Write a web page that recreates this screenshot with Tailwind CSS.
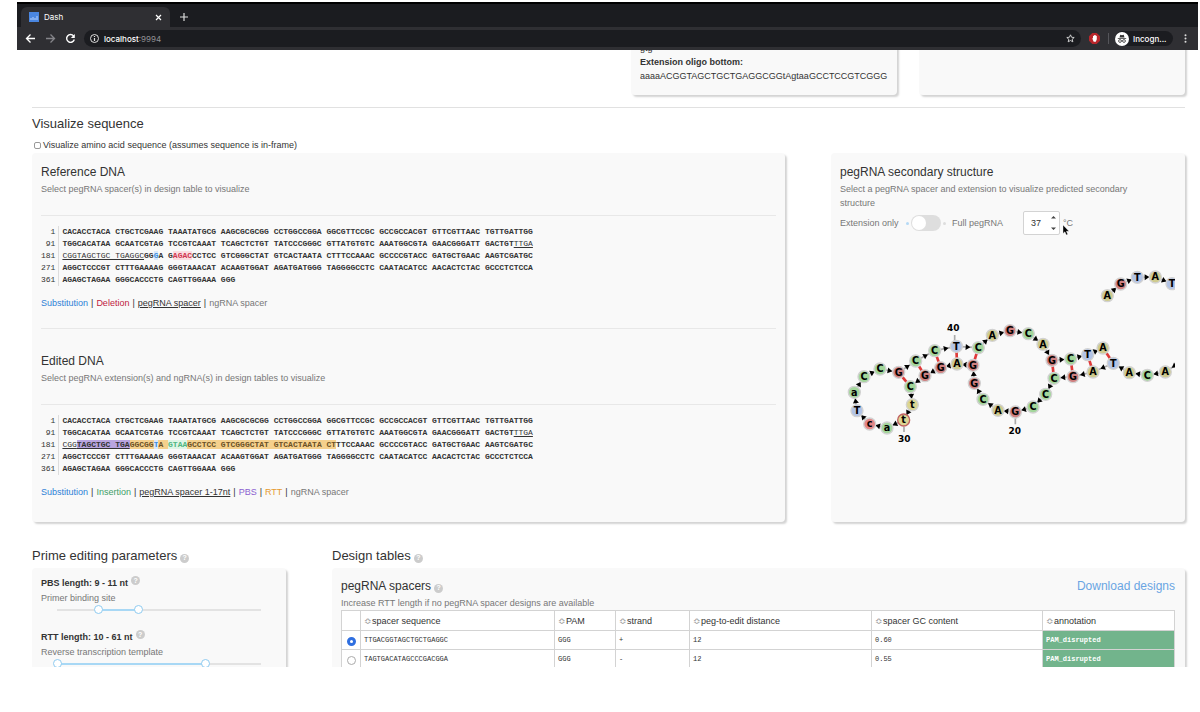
<!DOCTYPE html>
<html lang="en">
<head>
  <meta charset="UTF-8">
  <meta name="viewport" content="width=device-width, initial-scale=1.0">
  <title>Dash</title>
  <script src="https://cdn.jsdelivr.net/npm/@tailwindcss/browser@4"></script>
</head>
<body class="bg-white font-['Liberation_Sans',Arial,sans-serif] text-[9px] leading-[14px] text-[#333]">
  <div class="flex h-screen flex-col pt-[2px] pr-[2px] pb-[45px] pl-[17px]">

    <!-- browser bar -->
    <header class="shrink-0 border-t-2 border-black bg-[#1b1c20] font-[Inter,sans-serif] text-[8px] text-white">
      <div class="flex h-[23px] items-end">
        <div class="ml-1 flex h-5 w-[149px] items-center rounded-t-md bg-[#2f2f33] px-2">
          <svg class="size-[10px]" viewBox="0 0 10 10"><rect width="10" height="10" fill="#4a86e0"/><path d="M2 8V6M4 8V5M6 8V6M8 8V4" stroke="#b9d4ff"/></svg>
          <span class="ml-[5px]">Dash</span>
          <button class="ml-auto" aria-label="Close tab"><svg class="size-[7px]" viewBox="0 0 7 7"><path d="M1 1l5 5M6 1l-5 5" stroke="#fff" stroke-width="1.2"/></svg></button>
        </div>
        <button class="mb-[6px] ml-[10px]" aria-label="New tab"><svg class="size-[8px]" viewBox="0 0 8 8"><path d="M4 0v8M0 4h8" stroke="#ddd" stroke-width="1.2"/></svg></button>
      </div>
      <div class="flex h-[23px] items-center bg-[#2f2f33] pl-2">
        <button aria-label="Back"><svg class="size-[11px]" viewBox="0 0 11 11" fill="none" stroke="#fff" stroke-width="1.3"><path d="M10 5.500H1.500M5.500 1.500l-4 4 4 4"/></svg></button>
        <button class="ml-[9px]" aria-label="Forward"><svg class="size-[11px]" viewBox="0 0 11 11" fill="none" stroke="#85858a" stroke-width="1.300"><path d="M1 5.500h8.500M5.500 1.500l4 4-4 4"/></svg></button>
        <button class="ml-[9px]" aria-label="Reload"><svg class="size-[11px]" viewBox="0 0 11 11" fill="none" stroke="#fff" stroke-width="1.400"><path d="M8.600 3A3.900 3.900 0 1 0 9.300 6.500"/><path d="M9.800 1v4H5.800z" fill="#fff" stroke="none"/></svg></button>
        <div class="ml-2 flex h-[17px] flex-1 items-center rounded-full bg-[#1b1c20] pr-[6px] pl-[6px]">
          <svg class="size-[9px]" viewBox="0 0 9 9" fill="none" stroke="#ddd"><circle cx="4.500" cy="4.500" r="4"/><path d="M4.500 4v3M4.500 2v1" stroke-width="1.200"/></svg>
          <span class="ml-[5px] flex-1 font-medium">localhost<span class="font-normal text-[#929296]">:9994</span></span>
          <button aria-label="Bookmark"><svg class="size-[9px]" viewBox="0 0 10 10" fill="none" stroke="#ddd"><path d="M5 .9l1.200 2.700 2.900.3-2.200 1.900.7 2.900L5 7.200 2.400 8.700l.7-2.900L.9 3.900l2.900-.3z"/></svg></button>
        </div>
        <button class="ml-2" aria-label="Ad blocker"><svg class="size-[11px]" viewBox="0 0 11 11"><path d="M3.300 0h4.400L11 3.300v4.400L7.700 11H3.300L0 7.700V3.300z" fill="#b8262b"/><path d="M3.300 5.500l.7-.4V3h.8v-.8h.8v-.3h.8v.6h.8v.6h.6v3.200L6.800 8.700H4.700z" fill="#fff"/></svg></button>
        <span class="ml-2 h-[11px] w-px bg-[#55555a]"></span>
        <div class="ml-[6px] flex h-[15px] w-[58px] items-center rounded-full bg-[#1b1c20]">
          <svg class="size-[14px]" viewBox="0 0 14 14"><circle cx="7" cy="7" r="7" fill="#fff"/><path d="M4.500 5.600l.8-2.800 1.700.4 1.700-.4.8 2.800zM2.800 6h8.400v.8H2.800z" fill="#333"/><g fill="none" stroke="#333" stroke-width=".8"><circle cx="5" cy="9" r="1.400"/><circle cx="9" cy="9" r="1.400"/><path d="M6.400 8.800h1.200"/></g></svg>
          <span class="ml-1 font-medium">Incogn...</span>
        </div>
        <button class="mr-[11px] ml-[11px]" aria-label="Menu"><svg class="h-[9px] w-[3px]" viewBox="0 0 3 9" fill="#ddd"><circle cx="1.500" cy="1.200" r="1"/><circle cx="1.500" cy="4.500" r="1"/><circle cx="1.500" cy="7.800" r="1"/></svg></button>
      </div>
    </header>

    <main class="min-h-0 flex-1 overflow-hidden pr-[13px] pl-[15px]">
      <!-- oligo cards, scrolled under the bar -->
      <section class="-mt-[9px] grid grid-cols-[577fr_266fr_266fr] gap-[22px]">
        <div></div>
        <div class="min-w-0 rounded bg-[#f9f9f9] px-[9px] pb-3 shadow-[2px_2px_2px_#d3d3d3]">
          <p>gtg</p>
          <p class="font-bold">Extension oligo bottom:</p>
          <p class="overflow-hidden whitespace-nowrap">aaaaACGGTAGCTGCTGAGGCGGtAgtaaGCCTCCGTCGGG</p>
        </div>
        <div class="rounded bg-[#f9f9f9] shadow-[2px_2px_2px_#d3d3d3]"></div>
      </section>

      <hr class="mt-[12px] border-[#e1e1e1]">

      <h2 class="mt-[6px] text-[13px] leading-5">Visualize sequence</h2>
      <label class="mt-1 flex items-center gap-[2px] pl-[2px]">
        <input type="checkbox" class="size-[7px] appearance-none rounded-[2px] border border-[#999] bg-white">
        Visualize amino acid sequence (assumes sequence is in-frame)
      </label>

      <section class="mt-[1px] grid grid-cols-[753fr_354fr] gap-[46px]">
        <div class="rounded bg-[#f9f9f9] px-[9px] pt-[9px] pb-[23px] shadow-[2px_2px_2px_#d3d3d3]">
          <h3 class="text-[12px] leading-5">Reference DNA</h3>
          <p class="text-[#777]">Select pegRNA spacer(s) in design table to visualize</p>
          <hr class="mt-[19px] border-[#e8e8e8]">
          <table class="mt-[10px] font-['Liberation_Mono','Courier_New',monospace] text-[8px] leading-3 whitespace-pre">
            <tr><td class="pr-[3px] text-right">1</td><td class="border-l border-[#ddd] pl-[3px] font-bold">CACACCTACA CTGCTCGAAG TAAATATGCG AAGCGCGCGG CCTGGCCGGA GGCGTTCCGC GCCGCCACGT GTTCGTTAAC TGTTGATTGG</td></tr>
            <tr><td class="pr-[3px] text-right">91</td><td class="border-l border-[#ddd] pl-[3px] font-bold">TGGCACATAA GCAATCGTAG TCCGTCAAAT TCAGCTCTGT TATCCCGGGC GTTATGTGTC AAATGGCGTA GAACGGGATT GACTGT<span class="font-normal underline">TTGA</span></td></tr>
            <tr><td class="pr-[3px] text-right">181</td><td class="border-l border-[#ddd] pl-[3px] font-bold"><span class="font-normal underline">CGGTAGCTGC TGAGGC</span>GG<span class="bg-[#d9e9fc] text-[#3b8de0]">G</span>A G<span class="bg-[#fadde0] text-[#d0364f]">AGAC</span>CCTCC GTCGGGCTAT GTCACTAATA CTTTCCAAAC GCCCCGTACC GATGCTGAAC AAGTCGATGC</td></tr>
            <tr><td class="pr-[3px] text-right">271</td><td class="border-l border-[#ddd] pl-[3px] font-bold">AGGCTCCCGT CTTTGAAAAG GGGTAAACAT ACAAGTGGAT AGATGATGGG TAGGGGCCTC CAATACATCC AACACTCTAC GCCCTCTCCA</td></tr>
            <tr><td class="pr-[3px] text-right">361</td><td class="border-l border-[#ddd] pl-[3px] font-bold">AGAGCTAGAA GGGCACCCTG CAGTTGGAAA GGG</td></tr>
          </table>
          <p class="mt-[10px] flex gap-[3px]"><span class="text-[#2d7fd6]">Substitution</span> | <span class="text-[#c0213f]">Deletion</span> | <span class="underline">pegRNA spacer</span> | <span class="text-[#777]">ngRNA spacer</span></p>
          <hr class="mt-[18px] border-[#e8e8e8]">

          <h3 class="mt-[22px] text-[12px] leading-5">Edited DNA</h3>
          <p class="text-[#777]">Select pegRNA extension(s) and ngRNA(s) in design tables to visualize</p>
          <hr class="mt-[19px] border-[#e8e8e8]">
          <table class="mt-[10px] font-['Liberation_Mono','Courier_New',monospace] text-[8px] leading-3 whitespace-pre">
            <tr><td class="pr-[3px] text-right">1</td><td class="border-l border-[#ddd] pl-[3px] font-bold">CACACCTACA CTGCTCGAAG TAAATATGCG AAGCGCGCGG CCTGGCCGGA GGCGTTCCGC GCCGCCACGT GTTCGTTAAC TGTTGATTGG</td></tr>
            <tr><td class="pr-[3px] text-right">91</td><td class="border-l border-[#ddd] pl-[3px] font-bold">TGGCACATAA GCAATCGTAG TCCGTCAAAT TCAGCTCTGT TATCCCGGGC GTTATGTGTC AAATGGCGTA GAACGGGATT GACTGT<span class="font-normal underline">TTGA</span></td></tr>
            <tr><td class="pr-[3px] text-right">181</td><td class="border-l border-[#ddd] pl-[3px] font-bold"><span class="font-normal underline">CGG</span><span class="bg-[#b9a5e0] underline">TAGCTGC TGA</span><span class="bg-[#f5d08c] text-[#6b5026]">GGCGG</span><span class="bg-[#d9e9fc] text-[#3b8de0]">T</span><span class="bg-[#f5d08c] text-[#6b5026]">A </span><span class="bg-[#dff5e6] text-[#4fb783]">GTAA</span><span class="bg-[#f5d08c] text-[#6b5026]">GCCTCC GTCGGGCTAT GTCACTAATA CT</span>TTCCAAAC GCCCCGTACC GATGCTGAAC AAGTCGATGC</td></tr>
            <tr><td class="pr-[3px] text-right">271</td><td class="border-l border-[#ddd] pl-[3px] font-bold">AGGCTCCCGT CTTTGAAAAG GGGTAAACAT ACAAGTGGAT AGATGATGGG TAGGGGCCTC CAATACATCC AACACTCTAC GCCCTCTCCA</td></tr>
            <tr><td class="pr-[3px] text-right">361</td><td class="border-l border-[#ddd] pl-[3px] font-bold">AGAGCTAGAA GGGCACCCTG CAGTTGGAAA GGG</td></tr>
          </table>
          <p class="mt-[10px] flex gap-[3px]"><span class="text-[#2d7fd6]">Substitution</span> | <span class="text-[#3f9e68]">Insertion</span> | <span class="underline">pegRNA spacer 1-17nt</span> | <span class="text-[#8b5fd0]">PBS</span> | <span class="text-[#e69a2e]">RTT</span> | <span class="text-[#777]">ngRNA spacer</span></p>
        </div>

        <div class="rounded bg-[#f9f9f9] pt-[9px] pr-[10px] pl-[9px] shadow-[2px_2px_2px_#d3d3d3]">
          <h3 class="text-[12px] leading-5">pegRNA secondary structure</h3>
          <p class="pr-4 text-[#777]">Select a pegRNA spacer and extension to visualize predicted secondary structure</p>
          <div class="mt-[1px] flex h-6 items-center text-[#777]">
            <span class="w-[66px]">Extension only</span>
            <span class="size-[3px] rounded-full bg-[#b5d9f5]"></span>
            <input type="checkbox" role="switch" aria-label="Full pegRNA" class="mx-[2px] flex h-4 w-[30px] appearance-none items-center rounded-full bg-[#dedede] px-px before:size-[14px] before:rounded-full before:bg-white">
            <span class="size-[3px] rounded-full bg-[#ddd]"></span>
            <span class="ml-[6px] w-[71px]">Full pegRNA</span>
            <div class="relative">
              <input type="text" inputmode="numeric" value="37" aria-label="Temperature" class="block h-6 w-[37px] rounded-[2px] border border-[#d3d3d3] bg-white pl-[7px] text-[#333]">
              <svg class="absolute top-[5px] right-1 h-[14px] w-[5px]" viewBox="0 0 5 14" fill="#444"><path d="M0 2.500L2.500 0 5 2.500zM0 11.500h5L2.500 14z"/></svg>
            </div>
            <span class="relative ml-[3px]">°C
              <svg class="absolute top-[9px] left-0 h-[10px] w-[7px]" viewBox="0 0 7 10"><path d="M0 0v8.500l1.900-1.700L3.300 10l1.500-.7-1.400-3H6z" fill="#000" stroke="#fff" stroke-width=".4"/></svg>
            </span>
          </div>
          <svg id="rna" class="mt-5 block w-full font-['DejaVu_Sans',Verdana,sans-serif] font-bold" viewBox="60 0 1005 600" text-anchor="middle"></svg>
        </div>
      </section>

      <section class="mt-6 grid grid-cols-[254fr_853fr] gap-[46px]">
        <div>
          <h2 class="flex items-center gap-[3px] text-[13px] leading-5">Prime editing parameters <span class="mt-1 flex size-[9px] items-center justify-center rounded-full bg-[#ccc] text-[7px] font-bold text-white">?</span></h2>
          <div class="mt-[2px] rounded bg-[#f9f9f9] px-[9px] pt-2 pb-10 shadow-[2px_2px_2px_#d3d3d3]">
            <h4 class="flex gap-[3px] font-bold">PBS length: 9 - 11 nt <span class="flex size-[9px] items-center justify-center rounded-full bg-[#ccc] text-[7px] text-white">?</span></h4>
            <p class="mt-px text-[#777]">Primer binding site</p>
            <div class="relative mr-4 ml-4 flex h-[9px] items-center">
              <div class="h-[2px] w-full bg-[#e3e3e3]"><div class="h-full bg-[#a8d8f5]" style="margin-left: 20%; width: 20%"></div></div>
              <input type="range" min="7" max="17" value="9" aria-label="Minimum PBS length" class="pointer-events-none absolute -left-1 h-[9px] w-[calc(100%+8px)] appearance-none bg-transparent [&::-webkit-slider-thumb]:pointer-events-auto [&::-webkit-slider-thumb]:size-[9px] [&::-webkit-slider-thumb]:appearance-none [&::-webkit-slider-thumb]:rounded-full [&::-webkit-slider-thumb]:border [&::-webkit-slider-thumb]:border-[#8fcbf0] [&::-webkit-slider-thumb]:bg-white">
              <input type="range" min="7" max="17" value="11" aria-label="Maximum PBS length" class="pointer-events-none absolute -left-1 h-[9px] w-[calc(100%+8px)] appearance-none bg-transparent [&::-webkit-slider-thumb]:pointer-events-auto [&::-webkit-slider-thumb]:size-[9px] [&::-webkit-slider-thumb]:appearance-none [&::-webkit-slider-thumb]:rounded-full [&::-webkit-slider-thumb]:border [&::-webkit-slider-thumb]:border-[#8fcbf0] [&::-webkit-slider-thumb]:bg-white">
            </div>
            <h4 class="mt-4 flex gap-[3px] font-bold">RTT length: 10 - 61 nt <span class="flex size-[9px] items-center justify-center rounded-full bg-[#ccc] text-[7px] text-white">?</span></h4>
            <p class="mt-px text-[#777]">Reverse transcription template</p>
            <div class="relative mr-4 ml-4 flex h-[9px] items-center">
              <div class="h-[2px] w-full bg-[#e3e3e3]"><div class="h-full bg-[#a8d8f5]" style="width: 73%"></div></div>
              <input type="range" min="10" max="80" value="10" aria-label="Minimum RTT length" class="pointer-events-none absolute -left-1 h-[9px] w-[calc(100%+8px)] appearance-none bg-transparent [&::-webkit-slider-thumb]:pointer-events-auto [&::-webkit-slider-thumb]:size-[9px] [&::-webkit-slider-thumb]:appearance-none [&::-webkit-slider-thumb]:rounded-full [&::-webkit-slider-thumb]:border [&::-webkit-slider-thumb]:border-[#8fcbf0] [&::-webkit-slider-thumb]:bg-white">
              <input type="range" min="10" max="80" value="61" aria-label="Maximum RTT length" class="pointer-events-none absolute -left-1 h-[9px] w-[calc(100%+8px)] appearance-none bg-transparent [&::-webkit-slider-thumb]:pointer-events-auto [&::-webkit-slider-thumb]:size-[9px] [&::-webkit-slider-thumb]:appearance-none [&::-webkit-slider-thumb]:rounded-full [&::-webkit-slider-thumb]:border [&::-webkit-slider-thumb]:border-[#8fcbf0] [&::-webkit-slider-thumb]:bg-white">
            </div>
          </div>
        </div>

        <div class="min-w-0">
          <h2 class="flex items-center gap-[3px] text-[13px] leading-5">Design tables <span class="mt-1 flex size-[9px] items-center justify-center rounded-full bg-[#ccc] text-[7px] font-bold text-white">?</span></h2>
          <div class="mt-[2px] rounded bg-[#f9f9f9] pt-2 pr-[10px] pb-10 pl-[9px] shadow-[2px_2px_2px_#d3d3d3]">
            <div class="flex items-center justify-between text-[12px] leading-5">
              <h3 class="flex items-center gap-[3px]">pegRNA spacers <span class="mt-1 flex size-[9px] items-center justify-center rounded-full bg-[#ccc] text-[7px] font-bold text-white">?</span></h3>
              <a href="#" class="text-[#6aa5e3]">Download designs</a>
            </div>
            <p class="text-[#777]">Increase RTT length if no pegRNA spacer designs are available</p>
            <table class="w-full table-fixed border-collapse bg-white text-left [&_td]:border [&_td]:border-[#d3d3d3] [&_td]:px-[3px] [&_th]:border [&_th]:border-[#d3d3d3] [&_th]:px-[3px]">
              <thead>
                <tr class="h-5">
                  <th class="w-[19px]"></th>
                  <th class="w-[194px] font-normal"><span class="text-[#999]">≎</span>spacer sequence</th>
                  <th class="w-[61px] font-normal"><span class="text-[#999]">≎</span>PAM</th>
                  <th class="w-[74px] font-normal"><span class="text-[#999]">≎</span>strand</th>
                  <th class="w-[182px] font-normal"><span class="text-[#999]">≎</span>peg-to-edit distance</th>
                  <th class="w-[171px] font-normal"><span class="text-[#999]">≎</span>spacer GC content</th>
                  <th class="font-normal"><span class="text-[#999]">≎</span>annotation</th>
                </tr>
              </thead>
              <tbody class="font-['Liberation_Mono','Courier_New',monospace] text-[7px]">
                <tr class="h-[19px]">
                  <td><input type="radio" name="spacer" checked aria-label="TTGACGGTAGCTGCTGAGGC" class="mx-auto mt-[3px] block size-[9px] appearance-none rounded-full border-3 border-[#2f6fe0] bg-white"></td>
                  <td>TTGACGGTAGCTGCTGAGGC</td><td>GGG</td><td>+</td><td>12</td><td>0.60</td>
                  <td class="bg-[#72b48c] font-bold text-white">PAM_disrupted</td>
                </tr>
                <tr class="h-[19px]">
                  <td><input type="radio" name="spacer" aria-label="TAGTGACATAGCCCGACGGA" class="mx-auto mt-[3px] block size-[9px] appearance-none rounded-full border border-[#aaa] bg-white"></td>
                  <td>TAGTGACATAGCCCGACGGA</td><td>GGG</td><td>-</td><td>12</td><td>0.55</td>
                  <td class="bg-[#72b48c] font-bold text-white">PAM_disrupted</td>
                </tr>
              </tbody>
            </table>
          </div>
        </div>
      </section>
    </main>
  </div>

  <script>
    const colors = { A: '#cfcb8e', G: '#cf8080', C: '#a3d69b', T: '#b3c4e6', a: '#a3d69b', t: '#dbd592', c: '#e38686' };
    const start = [['A', 862, 122], ['G', 902, 87], ['T', 952, 67], ['A', 1006, 66], ['T', 1056, 86]];
    const chain = [
      ['C', 1090, 315], ['A', 1036, 351], ['C', 982, 361], ['A', 928, 353], ['T', 880, 325], ['A', 819, 351],
      ['G', 759, 365], ['C', 702, 370], ['C', 677, 418], ['C', 639, 456], ['G', 586, 471], ['A', 534, 466],
      ['C', 489, 433], ['G', 463, 385], ['G', 459, 331], ['A', 411, 327], ['G', 362, 338], ['G', 315, 362],
      ['C', 271, 395], ['t', 277, 449], ['t', 251, 495], ['a', 201, 519], ['c', 149, 507], ['T', 111, 467],
      ['a', 103, 412], ['C', 132, 365], ['C', 180, 342], ['G', 236, 352], ['C', 287, 318], ['C', 344, 287],
      ['T', 409, 274], ['C', 475, 278], ['A', 517, 241], ['G', 570, 227], ['C', 625, 236], ['A', 669, 268],
      ['G', 696, 316], ['C', 752, 312], ['T', 803, 299], ['A', 849, 279]
    ];
    // indexes into chain
    const pairs = [[4, 39], [5, 38], [6, 37], [7, 36], [14, 31], [15, 30], [16, 29], [17, 28], [18, 27]];

    let out = '';
    pairs.forEach(([a, b]) => {
      out += `<line x1="${chain[a][1]}" y1="${chain[a][2]}" x2="${chain[b][1]}" y2="${chain[b][2]}" stroke="#e03a3a" stroke-width="8"/>`;
    });
    [start, chain].forEach(list => {
      for (let i = 0; i < list.length - 1; i++) {
        const [, x1, y1] = list[i];
        const [, x2, y2] = list[i + 1];
        const angle = Math.atan2(y2 - y1, x2 - x1) * 180 / Math.PI;
        out += `<line x1="${x1}" y1="${y1}" x2="${x2}" y2="${y2}" stroke="#aaa" stroke-width="5"/>`;
        out += `<path d="M-5 -9L9 0L-5 9z" transform="translate(${(x1 + x2) / 2} ${(y1 + y2) / 2}) rotate(${angle})"/>`;
      }
    });
    out += '<path d="M404 240V258M586 490V508M252 515V531" stroke="#aaa" stroke-width="5"/>';
    [start, chain].forEach(list => {
      list.forEach(([base, x, y]) => {
        const ring = x === 251 ? '#c06060' : '#d2d2d2';
        out += `<circle cx="${x}" cy="${y}" r="18" fill="${colors[base]}" stroke="${ring}" stroke-width="4"/>`;
        out += `<text x="${x}" y="${y + 10}" font-size="29">${base}</text>`;
      });
    });
    [[40, 400, 228], [20, 584, 538], [30, 253, 562]].forEach(([n, x, y]) => {
      out += `<text x="${x}" y="${y}" font-size="27">${n}</text>`;
    });
    document.getElementById('rna').innerHTML = out;
  </script>
</body>
</html>
